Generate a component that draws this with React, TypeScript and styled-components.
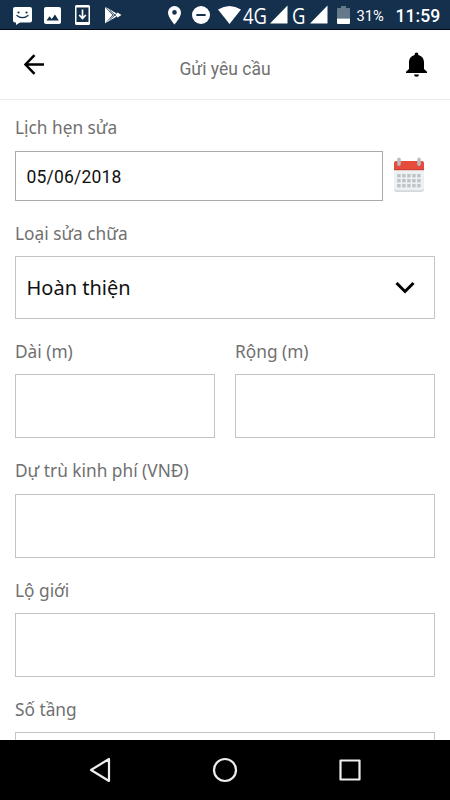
import React from "react";
import styled, { createGlobalStyle } from "styled-components";

const GlobalStyle = createGlobalStyle`
  *, *::before, *::after { box-sizing: border-box; }
  body { margin: 0; background: #fff; }
`;

const Screen = styled.div`
  width: 450px;
  height: 800px;
  display: flex;
  flex-direction: column;
  overflow: hidden;
  background: #fff;
  font-family: "Noto Sans", sans-serif;
`;

const StatusBar = styled.div`
  height: 30px;
  flex: none;
  display: flex;
  align-items: flex-start;
  background: #14304d;
  border-bottom: 1px solid #000814;
  color: #fff;
`;

const StatusIcon = styled.svg<{ $gap: number; $top: number }>`
  display: block;
  flex: none;
  margin-left: ${(p) => p.$gap}px;
  margin-top: ${(p) => p.$top}px;
  fill: #fff;
`;

const NetworkText = styled.span<{ $gap: number; $width: number }>`
  flex: none;
  width: ${(p) => p.$width}px;
  margin-left: ${(p) => p.$gap}px;
  margin-top: 4px;
  font-family: "Open Sans", sans-serif;
  font-size: 22.5px;
  line-height: 24px;
  white-space: nowrap;
  transform: scaleX(0.82);
  transform-origin: left;
`;

const StatusText = styled.span<{ $gap: number; $size: number; $weight: number; $width: number }>`
  flex: none;
  width: ${(p) => p.$width}px;
  margin-left: ${(p) => p.$gap}px;
  margin-top: 4px;
  font-family: Roboto, sans-serif;
  font-size: ${(p) => p.$size}px;
  font-weight: ${(p) => p.$weight};
  line-height: 24px;
  white-space: nowrap;
`;

const Header = styled.header`
  height: 70px;
  flex: none;
  display: grid;
  grid-template-columns: 60px 1fr 60px;
  border-bottom: 1px solid #e9e9e9;
`;

const HeaderButton = styled.button<{ $left: number; $top: number }>`
  border: 0;
  background: none;
  padding: ${(p) => p.$top}px 0 0 ${(p) => p.$left}px;
  display: flex;
  align-items: flex-start;
`;

const Title = styled.h1`
  margin: 0;
  padding-top: 27px;
  text-align: center;
  font: 400 17.5px/25px Roboto, sans-serif;
  color: #707070;
`;

const Form = styled.form`
  height: 640px;
  flex: none;
  padding: 15px 15px 0;
  overflow: hidden;
`;

const Field = styled.div<{ $height: number }>`
  height: ${(p) => p.$height}px;
  flex: 1;
`;

const Label = styled.label<{ $space: number }>`
  display: block;
  height: 26px;
  margin-bottom: ${(p) => p.$space}px;
  font-size: 17.3px;
  line-height: 26px;
  color: #707070;
  white-space: nowrap;
`;

const Row = styled.div`
  display: flex;
  gap: 20px;
`;

const DateRow = styled.div`
  display: flex;
  gap: 10px;
`;

const Box = styled.div<{ $height: number; $tone?: string }>`
  height: ${(p) => p.$height}px;
  border: 1px solid ${(p) => p.$tone ?? "#c4c4c4"};
  background: #fff;
  display: flex;
  align-items: center;
  justify-content: space-between;
  padding: 0 19px 0 10.5px;
  color: #111;
`;

const DateBox = styled(Box)`
  width: 368px;
  padding-top: 1px;
  font-family: Roboto, sans-serif;
  font-size: 17.5px;
  letter-spacing: 0.2px;
`;

const SelectBox = styled(Box)`
  font-size: 20px;
`;

const NavBar = styled.nav`
  height: 60px;
  flex: none;
  display: flex;
  align-items: center;
  justify-content: space-between;
  padding: 0 87px;
  background: #000;
`;

const NavIcon = styled.svg`
  display: block;
  fill: none;
  stroke: #eee;
  stroke-width: 2.2;
  stroke-linejoin: round;
`;

const Signal = ({ gap }: { gap: number }) => (
  <StatusIcon $gap={gap} $top={5} width="18" height="19" viewBox="0 0 18 19">
    <path d="M17.5 .5V18.5H0Z" />
  </StatusIcon>
);

const Status = () => (
  <StatusBar>
    <StatusIcon $gap={13} $top={7} width="19" height="18" viewBox="0 0 19 18">
      <path d="M2 0H17Q19 0 19 2V13.5Q19 15.5 17 15.5H7L3 18V15.5H2Q0 15.5 0 13.5V2Q0 0 2 0Z" />
      <circle cx="5.5" cy="5.5" r="1.1" fill="#14304d" />
      <circle cx="13.5" cy="5.5" r="1.1" fill="#14304d" />
      <path d="M3.5 8.2Q9.5 13.2 15.5 8.2" fill="none" stroke="#14304d" strokeWidth="1.3" />
    </StatusIcon>
    <StatusIcon $gap={12} $top={7} width="17" height="17" viewBox="0 0 17 17">
      <rect width="17" height="17" rx="2" />
      <path d="M2.5 13.5L5.5 9.3L7.8 12L11 7.5L14.8 13.5Z" fill="#14304d" />
    </StatusIcon>
    <StatusIcon $gap={14} $top={5} width="15" height="20" viewBox="0 0 15 20">
      <path fillRule="evenodd" d="M1.5 0H13.5Q15 0 15 1.5V18.5Q15 20 13.5 20H1.5Q0 20 0 18.5V1.5Q0 0 1.5 0ZM1.5 2.5V17H13.5V2.5Z" />
      <path d="M7.5 4.5V13M4.2 10L7.5 13.5L10.8 10" fill="none" stroke="#fff" strokeWidth="1.7" />
    </StatusIcon>
    <StatusIcon $gap={15} $top={6} width="17" height="18" viewBox="0 0 17 18">
      <path d="M0 1L7.5 9L0 17.5Z" />
      <path d="M.7 1L11.3 7.2L9 9.6ZM.7 17L11.3 10.8L9 8.4Z" />
      <path d="M12.5 6.5L16.5 9L12.5 11.5L10.3 9Z" />
      <path d="M4.5 4L10 9L4.5 14" fill="none" stroke="#14304d" strokeWidth=".8" />
    </StatusIcon>
    <StatusIcon $gap={46} $top={6} width="13" height="19" viewBox="0 0 13 19">
      <path fillRule="evenodd" d="M6.5 0A6.5 6.5 0 0 0 0 6.5C0 11.3 6.5 18.5 6.5 18.5S13 11.3 13 6.5A6.5 6.5 0 0 0 6.5 0ZM6.5 4.1A2.3 2.3 0 1 1 6.5 8.7A2.3 2.3 0 0 1 6.5 4.1Z" />
    </StatusIcon>
    <StatusIcon $gap={11} $top={6} width="18" height="18" viewBox="0 0 18 18">
      <circle cx="9" cy="9" r="9" />
      <rect x="4.4" y="8" width="9.2" height="2" fill="#14304d" />
    </StatusIcon>
    <StatusIcon $gap={8} $top={6} width="23" height="18" viewBox="0 0 23 18">
      <path d="M0 3.5Q11.5-3.5 23 3.5L11.5 18Z" />
    </StatusIcon>
    <NetworkText $gap={2} $width={23}>4G</NetworkText>
    <Signal gap={4} />
    <NetworkText $gap={4} $width={14}>G</NetworkText>
    <Signal gap={3.5} />
    <StatusIcon $gap={9.5} $top={6} width="13" height="18" viewBox="0 0 13 18">
      <path d="M1 2H4V0H9V2H12Q13 2 13 3V12.5H0V3Q0 2 1 2Z" fill="#647989" />
      <path d="M0 12.5H13V17Q13 18 12 18H1Q0 18 0 17Z" />
    </StatusIcon>
    <StatusText $gap={6.5} $size={14.7} $weight={400} $width={28}>31%</StatusText>
    <StatusText $gap={11} $size={17.6} $weight={500} $width={45}>11:59</StatusText>
  </StatusBar>
);

const Calendar = () => (
  <svg width="32" height="36" viewBox="0 0 32 36">
    <path d="M1 12H31V32Q31 34.8 28.5 34.8H3.5Q1 34.8 1 32Z" fill="#c5ccd0" />
    <path d="M1 12H31V31Q31 33.5 28.5 33.5H3.5Q1 33.5 1 31Z" fill="#edf1f2" />
    <path d="M1 13V6Q1 4 3 4H29Q31 4 31 6V13Z" fill="#e64c3c" />
    <path d="M1 12.2H31V13.2H1Z" fill="#c93c31" />
    <path d="M6 2.3V7.3M26 2.3V7.3" stroke="#b7bdc2" strokeWidth="3.5" strokeLinecap="round" />
    {[17, 22, 27].map((y) =>
      [4.2, 9.2, 14.2, 19.2, 24.2].map((x) => (
        <rect key={`${x}-${y}`} x={x} y={y} width="3.4" height="3.4" fill="#bdc3c7" />
      )),
    )}
  </svg>
);

const CalendarButton = styled.button`
  border: 0;
  padding: 6px 0 0;
  background: none;
  display: flex;
  align-items: flex-start;
`;

export default function App() {
  return (
    <>
      <GlobalStyle />
      <Screen>
        <Status />
        <Header>
          <HeaderButton $left={24} $top={24} aria-label="Back">
            <svg width="21" height="21" viewBox="0 0 21 21" fill="none" stroke="#000" strokeWidth="2.5">
              <path d="M20 10.5H2M10.5 1.2L1.5 10.5L10.5 19.8" />
            </svg>
          </HeaderButton>
          <Title>Gửi yêu cầu</Title>
          <HeaderButton $left={16} $top={22} aria-label="Notifications">
            <svg width="21" height="25" viewBox="0 0 21 25">
              <path d="M10.5 0.5C9.4 .5 8.7 1.2 8.7 2.3V3C5.2 3.8 3 6.6 3 10.2V17L0 19.8V21H21V19.8L18 17V10.2C18 6.6 15.8 3.8 12.3 3V2.3C12.3 1.2 11.6.5 10.5.5ZM8 22.5A2.5 2.2 0 0 0 13 22.5Z" />
            </svg>
          </HeaderButton>
        </Header>
        <Form>
          <Field $height={106}>
            <Label $space={10}>Lịch hẹn sửa</Label>
            <DateRow>
              <DateBox $height={50} $tone="#aaa">05/06/2018</DateBox>
              <CalendarButton type="button" aria-label="Calendar"><Calendar /></CalendarButton>
            </DateRow>
          </Field>
          <Field $height={118}>
            <Label $space={9}>Loại sửa chữa</Label>
            <SelectBox $height={63}>
              Hoàn thiện
              <svg width="20" height="14" viewBox="0 0 20 14" fill="none" stroke="#000" strokeWidth="3">
                <path d="M1.5 2L10 10.5L18.5 2" />
              </svg>
            </SelectBox>
          </Field>
          <Row>
            <Field $height={119}>
              <Label $space={9}>Dài (m)</Label>
              <Box $height={64} />
            </Field>
            <Field $height={119}>
              <Label $space={9}>Rộng (m)</Label>
              <Box $height={64} />
            </Field>
          </Row>
          <Field $height={120}>
            <Label $space={10}>Dự trù kinh phí (VNĐ)</Label>
            <Box $height={64} />
          </Field>
          <Field $height={119}>
            <Label $space={9}>Lộ giới</Label>
            <Box $height={64} />
          </Field>
          <Field $height={119}>
            <Label $space={9}>Số tầng</Label>
            <Box $height={64} />
          </Field>
        </Form>
        <NavBar>
          <NavIcon width="26" height="26" viewBox="0 0 26 26">
            <path d="M22 2V24L4 13Z" />
          </NavIcon>
          <NavIcon width="26" height="26" viewBox="0 0 26 26">
            <circle cx="13" cy="13" r="11" />
          </NavIcon>
          <NavIcon width="26" height="26" viewBox="0 0 26 26">
            <rect x="3.5" y="3.5" width="19" height="19" />
          </NavIcon>
        </NavBar>
      </Screen>
    </>
  );
}
